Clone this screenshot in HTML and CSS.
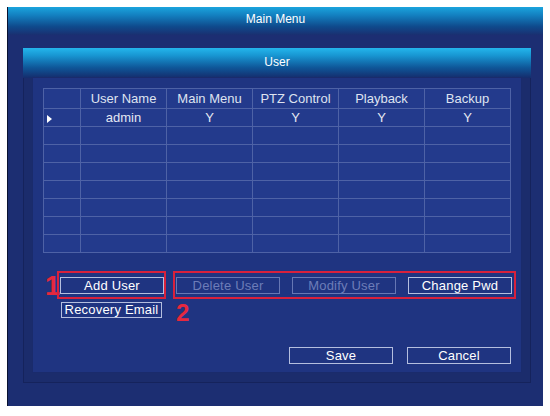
FILE: index.html
```html
<!DOCTYPE html>
<html>
<head>
<meta charset="utf-8">
<link rel="stylesheet" href="styles.css">
</head>
<body>
<div class="window">
  <div class="win-title">Main Menu</div>
  <div class="win-body">
    <div class="panel">
      <div class="panel-title">User</div>
      <div class="panel-frame">
        <div class="panel-content">
          <table class="grid">
            <tr class="head"><th class="c0"></th><th>User Name</th><th>Main Menu</th><th>PTZ Control</th><th>Playback</th><th>Backup</th></tr>
            <tr><td class="c0"><span class="arrow"></span></td><td>admin</td><td>Y</td><td>Y</td><td>Y</td><td>Y</td></tr>
            <tr><td class="c0"></td><td></td><td></td><td></td><td></td><td></td></tr>
            <tr><td class="c0"></td><td></td><td></td><td></td><td></td><td></td></tr>
            <tr><td class="c0"></td><td></td><td></td><td></td><td></td><td></td></tr>
            <tr><td class="c0"></td><td></td><td></td><td></td><td></td><td></td></tr>
            <tr><td class="c0"></td><td></td><td></td><td></td><td></td><td></td></tr>
            <tr><td class="c0"></td><td></td><td></td><td></td><td></td><td></td></tr>
            <tr><td class="c0"></td><td></td><td></td><td></td><td></td><td></td></tr>
          </table>
          <div class="actions">
            <div class="num num1">1</div>
            <div class="col1">
              <div class="redbox box1"><div class="btn">Add User</div></div>
              <div class="btn btn-rec">Recovery Email</div>
            </div>
            <div class="col2">
              <div class="redbox box2">
                <div class="btn disabled">Delete User</div>
                <div class="btn disabled">Modify User</div>
                <div class="btn">Change Pwd</div>
              </div>
              <div class="num num2">2</div>
            </div>
          </div>
          <div class="footer">
            <div class="btn">Save</div>
            <div class="btn">Cancel</div>
          </div>
        </div>
      </div>
    </div>
  </div>
</div>
</body>
</html>
```
FILE: styles.css
```css
html, body {
  margin: 0;
  padding: 0;
  background: #ffffff;
}
body {
  font-family: "Liberation Sans", Arial, sans-serif;
}
.window {
  margin: 7px 0 0 7px;
  width: 536px;
  height: 399px;
  box-sizing: border-box;
  background: #1c2e72;
  border-left: 1px solid #0a1230;
  display: flex;
  flex-direction: column;
}
.win-title {
  height: 28px;
  flex: none;
  background: linear-gradient(to bottom, #1ba4dd 0%, #137fbf 30%, #0f4a8c 70%, #1a2f70 100%);
  color: #ffffff;
  font-size: 12px;
  text-align: center;
  line-height: 25px;
}
.win-body {
  flex: 1;
  min-height: 0;
  padding: 13px 12px 23px 15px;
  display: flex;
}
.panel {
  flex: 1;
  min-width: 0;
  background: #1b2c6c;
  box-shadow: inset 0 0 0 1px #15235c;
  display: flex;
  flex-direction: column;
}
.panel-title {
  height: 30px;
  flex: none;
  background: linear-gradient(to bottom, #24b6ec 0%, #1896d2 25%, #0f5799 65%, #152c6c 100%);
  color: #ffffff;
  font-size: 12px;
  text-align: center;
  line-height: 28px;
}
.panel-frame {
  flex: 1;
  min-width: 0;
  padding: 0 10px 11px 10px;
  display: flex;
}
.panel-content {
  flex: 1;
  min-width: 0;
  background: #1f3481;
  box-shadow: 0 0 0 1px #1a2b6c;
  padding: 10px 10px 0 10px;
}
.grid {
  border-collapse: collapse;
  width: 468px;
  table-layout: fixed;
  background: #233a8c;
  color: #e4e7f2;
  font-size: 13px;
}
.grid th, .grid td {
  border: 1px solid #4e62a6;
  padding: 0;
  text-align: center;
  font-weight: normal;
  height: 17px;
  line-height: 16px;
}
.grid .head th {
  height: 19px;
  line-height: 18px;
  color: #dfe3f0;
}
.grid .c0 {
  width: 36px;
  text-align: left;
}
.arrow {
  display: inline-block;
  margin-left: 3px;
  width: 0;
  height: 0;
  border-top: 4px solid transparent;
  border-bottom: 4px solid transparent;
  border-left: 5px solid #ffffff;
  vertical-align: -1px;
}
.btn {
  box-sizing: border-box;
  width: 104px;
  height: 17px;
  border: 1px solid #b4bedf;
  color: #ffffff;
  font-size: 13px;
  line-height: 15px;
  text-align: center;
  letter-spacing: 0.2px;
}
.btn.disabled {
  color: #6d7db8;
  border-color: #6677b4;
}
.actions {
  margin-top: 18px;
  display: flex;
  align-items: flex-start;
}
.num {
  color: #e5283e;
  font-weight: bold;
  font-family: "Liberation Sans", Arial, sans-serif;
}
.num1 {
  font-size: 27px;
  line-height: 24px;
  margin: 3px 2px 0 2px;
  width: 10px;
  letter-spacing: -2px;
}
.redbox {
  box-sizing: border-box;
  border: 2px solid #d8213c;
  height: 28px;
}
.box1 {
  width: 109px;
  padding: 4px 0 0 1px;
}
.btn-rec {
  width: 101px;
  height: 16px;
  line-height: 14px;
  margin: 3px 0 0 4px;
}
.col2 {
  margin-left: 7px;
  flex: none;
}
.box2 {
  width: 343px;
  padding: 4px 0 0 1px;
  display: flex;
  gap: 12px;
}
.num2 {
  font-size: 24px;
  line-height: 20px;
  margin: 4px 0 0 3px;
}
.footer {
  margin-top: 24px;
  display: flex;
  justify-content: flex-end;
  gap: 14px;
}
```
